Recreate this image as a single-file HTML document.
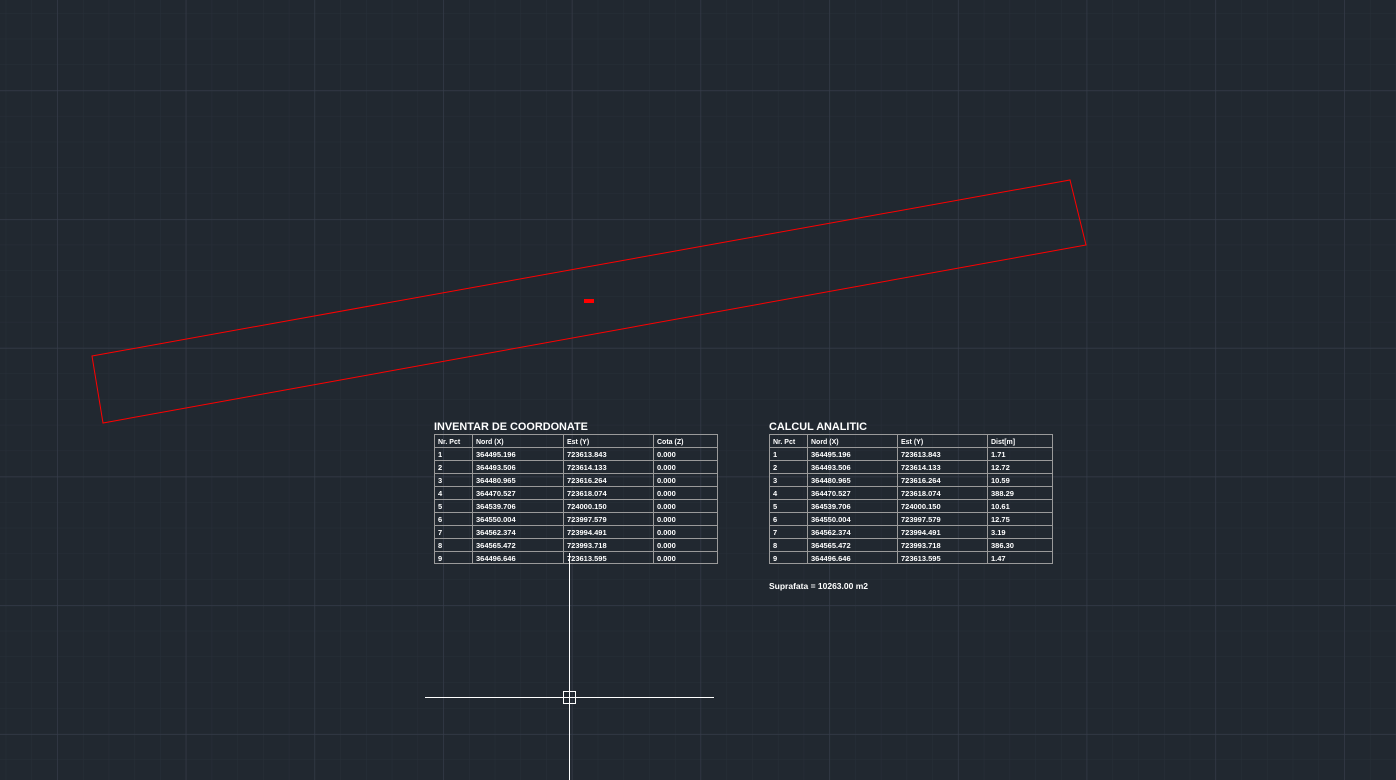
<!DOCTYPE html>
<html><head><style>
html,body{margin:0;padding:0;background:#212830;width:1396px;height:780px;overflow:hidden}
svg{display:block}
text{font-family:"Liberation Sans",sans-serif;fill:#fff;font-weight:bold}
</style></head><body>
<svg width="1396" height="780" xmlns="http://www.w3.org/2000/svg">
<defs>
<pattern id="mn" x="5.7" y="13" width="25.74" height="25.74" patternUnits="userSpaceOnUse">
<path d="M0 0H25.74M0 0V25.74" stroke="#282f39" stroke-width="1" fill="none"/>
</pattern>
<pattern id="mj" x="57" y="90.5" width="128.7" height="128.7" patternUnits="userSpaceOnUse">
<path d="M0 0H128.7M0 0V128.7" stroke="#373d4b" stroke-width="1.2" fill="none"/>
</pattern>
</defs>
<rect width="1396" height="780" fill="#212830"/>
<rect width="1396" height="780" fill="url(#mn)"/>
<rect width="1396" height="780" fill="url(#mj)"/>
<polygon points="92,356 1070,180 1086,245 103,423" fill="none" stroke="#ff0000" stroke-width="1"/>
<rect x="584" y="299" width="10" height="4" fill="#ff0000"/>

<g stroke="#9a9a9a" stroke-width="1" fill="none">
<rect x="434.5" y="434.5" width="283" height="129"/>
<path d="M472.5 434V563M563.5 434V563M653.5 434V563"/>
<path d="M434 447.5H717M434 460.5H717M434 473.5H717M434 486.5H717M434 499.5H717M434 512.5H717M434 525.5H717M434 538.5H717M434 551.5H717"/>
<rect x="769.5" y="434.5" width="283" height="129"/>
<path d="M807.5 434V563M897.5 434V563M987.5 434V563"/>
<path d="M769 447.5H1052M769 460.5H1052M769 473.5H1052M769 486.5H1052M769 499.5H1052M769 512.5H1052M769 525.5H1052M769 538.5H1052M769 551.5H1052"/>
</g>

<text x="434" y="430" font-size="10.9">INVENTAR DE COORDONATE</text>
<text x="769" y="430" font-size="10.9">CALCUL ANALITIC</text>
<text x="769" y="589" font-size="8.5">Suprafata = 10263.00 m2</text>

<g>
<text x="438" y="444" font-size="7">Nr. Pct</text><text x="476" y="444" font-size="7">Nord (X)</text><text x="567" y="444" font-size="7">Est (Y)</text><text x="657" y="444" font-size="7">Cota (Z)</text>
<text x="773" y="444" font-size="7">Nr. Pct</text><text x="811" y="444" font-size="7">Nord (X)</text><text x="901" y="444" font-size="7">Est (Y)</text><text x="991" y="444" font-size="7">Dist[m]</text>
</g>
<g font-size="7.5">
<text x="438" y="457">1</text><text x="476" y="457">364495.196</text><text x="567" y="457">723613.843</text><text x="657" y="457">0.000</text>
<text x="438" y="470">2</text><text x="476" y="470">364493.506</text><text x="567" y="470">723614.133</text><text x="657" y="470">0.000</text>
<text x="438" y="483">3</text><text x="476" y="483">364480.965</text><text x="567" y="483">723616.264</text><text x="657" y="483">0.000</text>
<text x="438" y="496">4</text><text x="476" y="496">364470.527</text><text x="567" y="496">723618.074</text><text x="657" y="496">0.000</text>
<text x="438" y="509">5</text><text x="476" y="509">364539.706</text><text x="567" y="509">724000.150</text><text x="657" y="509">0.000</text>
<text x="438" y="522">6</text><text x="476" y="522">364550.004</text><text x="567" y="522">723997.579</text><text x="657" y="522">0.000</text>
<text x="438" y="535">7</text><text x="476" y="535">364562.374</text><text x="567" y="535">723994.491</text><text x="657" y="535">0.000</text>
<text x="438" y="548">8</text><text x="476" y="548">364565.472</text><text x="567" y="548">723993.718</text><text x="657" y="548">0.000</text>
<text x="438" y="561">9</text><text x="476" y="561">364496.646</text><text x="567" y="561">723613.595</text><text x="657" y="561">0.000</text>

<text x="773" y="457">1</text><text x="811" y="457">364495.196</text><text x="901" y="457">723613.843</text><text x="991" y="457">1.71</text>
<text x="773" y="470">2</text><text x="811" y="470">364493.506</text><text x="901" y="470">723614.133</text><text x="991" y="470">12.72</text>
<text x="773" y="483">3</text><text x="811" y="483">364480.965</text><text x="901" y="483">723616.264</text><text x="991" y="483">10.59</text>
<text x="773" y="496">4</text><text x="811" y="496">364470.527</text><text x="901" y="496">723618.074</text><text x="991" y="496">388.29</text>
<text x="773" y="509">5</text><text x="811" y="509">364539.706</text><text x="901" y="509">724000.150</text><text x="991" y="509">10.61</text>
<text x="773" y="522">6</text><text x="811" y="522">364550.004</text><text x="901" y="522">723997.579</text><text x="991" y="522">12.75</text>
<text x="773" y="535">7</text><text x="811" y="535">364562.374</text><text x="901" y="535">723994.491</text><text x="991" y="535">3.19</text>
<text x="773" y="548">8</text><text x="811" y="548">364565.472</text><text x="901" y="548">723993.718</text><text x="991" y="548">386.30</text>
<text x="773" y="561">9</text><text x="811" y="561">364496.646</text><text x="901" y="561">723613.595</text><text x="991" y="561">1.47</text>
</g>

<g stroke="#ffffff" stroke-width="1" fill="none">
<path d="M569.5 553V780M425 697.5H714"/>
<rect x="563.5" y="691.5" width="12" height="12"/>
</g>
</svg>
</body></html>
